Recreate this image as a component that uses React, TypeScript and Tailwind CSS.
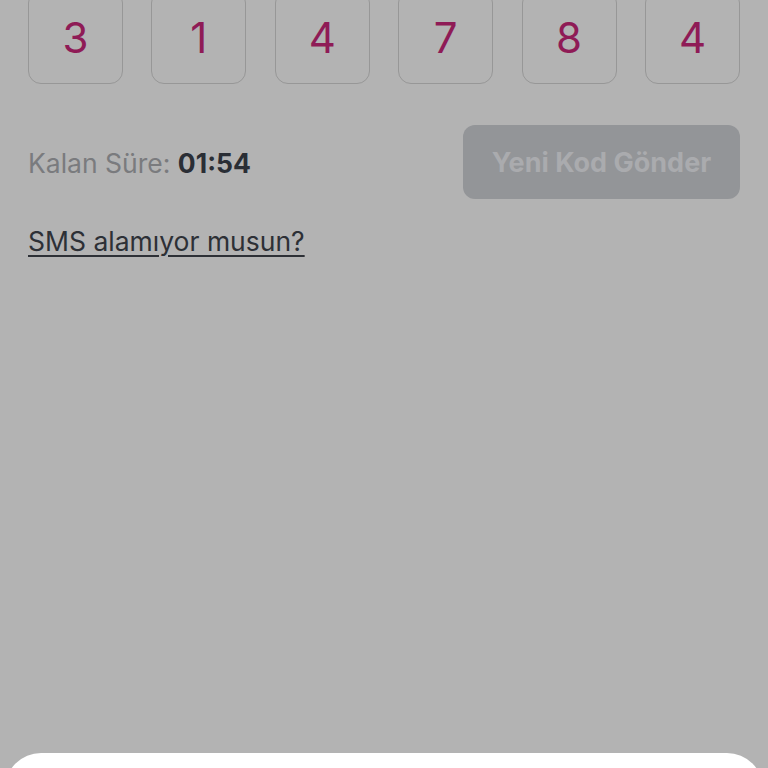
import React from 'react';

const code = ['3', '1', '4', '7', '8', '4'];

export default function App() {
  return (
    <div
      className="w-[768px] h-[768px] overflow-hidden bg-[#b3b3b3] flex flex-col"
      style={{ fontFamily: 'Inter, "Liberation Sans", sans-serif' }}
    >
      {/* OTP digits */}
      <div className="mt-[-10px] px-[28px] flex justify-between">
        {code.map((d, i) => (
          <div
            key={i}
            className="w-[95px] h-[94px] rounded-[13px] border-[1.5px] border-[#979797] flex items-center justify-center text-[42px] text-[#8f1b56]"
          >
            {d}
          </div>
        ))}
      </div>

      <div className="mt-[41px] px-[28px] flex items-center justify-between">
        <div className="pt-[3px] text-[26.5px] text-[#7a7b7e]">
          Kalan Süre: <span className="font-bold text-[#2a2e35]">01:54</span>
        </div>
        <button className="w-[277px] h-[74px] pt-[3px] rounded-[12px] bg-[#939598] text-[#aaabae] text-[27px] font-bold">
          Yeni Kod Gönder
        </button>
      </div>

      <div className="mt-[23px] px-[28px]">
        <span className="text-[26.5px] text-[#2d3036] underline underline-offset-[4px] decoration-[1.5px]">
          SMS alamıyor musun?
        </span>
      </div>

      <div className="flex-1" />
      {/* bottom sheet edge */}
      <div className="mx-[5px] h-[15px]">
        <div className="h-[60px] bg-white rounded-t-[36px]" />
      </div>
    </div>
  );
}
